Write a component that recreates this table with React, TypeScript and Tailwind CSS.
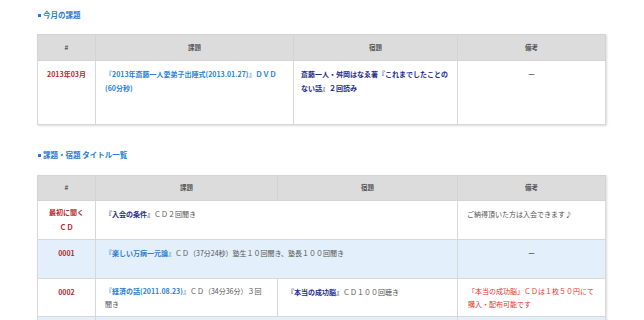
import React from "react";

const thBase = "bg-[#dcdcdc] border border-[#d4d4d4] text-[6.5px] font-bold text-[#555] text-center align-middle p-0";
const td = "border border-[#d8d8d8] align-top text-[7px] leading-[14px] pt-[6px] pb-[4px]";
const num = `${td} text-center font-bold text-[#b3272b] px-[4px]`;
const blue = "font-bold text-[#2b7fd3]";
const navy = "font-bold text-[#232d8c]";
const gray = "text-[#555]";
const red = "text-[#e5352b]";

function Heading({ children }: { children: React.ReactNode }) {
  return (
    <div className="flex items-center gap-[2px] h-[10px] pl-[1px] text-[7.5px] font-bold text-[#2a7dd0] leading-[10px]">
      <span className="inline-block w-[3px] h-[3px] bg-[#2a7dd0]" />
      <span>{children}</span>
    </div>
  );
}

export default function App() {
  const th1 = `${thBase} h-[26px]`;
  const th2 = `${thBase} h-[25px]`;
  return (
    <div className="w-[644px] h-[320px] overflow-hidden bg-white font-['Noto_Sans_CJK_JP','Noto_Sans',sans-serif]">
      <div className="pl-[37px] pt-[10px] flex flex-col">
        <Heading>今月の課題</Heading>
        <table className="mt-[14px] w-[568px] table-fixed border-collapse shadow-[1px_1px_2px_rgba(0,0,0,0.15)]">
          <colgroup>
            <col className="w-[58px]" />
            <col className="w-[198px]" />
            <col className="w-[164px]" />
            <col className="w-[148px]" />
          </colgroup>
          <thead>
            <tr>
              <th className={th1}>#</th>
              <th className={th1}>課題</th>
              <th className={th1}>宿題</th>
              <th className={th1}>備考</th>
            </tr>
          </thead>
          <tbody>
            <tr className="h-[64px] bg-white">
              <td className={num}>2013年03月</td>
              <td className={`${td} px-[9px]`}>
                <span className={blue}>『2013年斎藤一人愛弟子出陣式(2013.01.27)』ＤＶＤ (60分秒)</span>
              </td>
              <td className={`${td} px-[7px]`}>
                <span className={navy}>斎藤一人・舛岡はなゑ著『これまでしたことのない話』２回読み</span>
              </td>
              <td className={`${td} text-center ${gray}`}>ー</td>
            </tr>
          </tbody>
        </table>

        <div className="mt-[25px]">
          <Heading>課題・宿題 タイトル一覧</Heading>
        </div>
        <table className="mt-[15px] w-[568px] table-fixed border-collapse shadow-[1px_1px_2px_rgba(0,0,0,0.15)]">
          <colgroup>
            <col className="w-[58px]" />
            <col className="w-[182px]" />
            <col className="w-[180px]" />
            <col className="w-[148px]" />
          </colgroup>
          <thead>
            <tr>
              <th className={th2}>#</th>
              <th className={th2}>課題</th>
              <th className={th2}>宿題</th>
              <th className={th2}>備考</th>
            </tr>
          </thead>
          <tbody>
            <tr className="h-[38px] bg-white">
              <td className={`${num} !pt-[4px] !leading-[15px]`}>最初に聞く<br />ＣＤ</td>
              <td colSpan={2} className={`${td} px-[9px]`}>
                <span className={navy}>『入会の条件』</span>
                <span className={gray}>ＣＤ２回聞き</span>
              </td>
              <td className={`${td} px-[9px] ${gray}`}>ご納得頂いた方は入会できます♪</td>
            </tr>
            <tr className="h-[39px] bg-[#e3effa]">
              <td className={num}>0001</td>
              <td colSpan={2} className={`${td} px-[9px]`}>
                <span className={blue}>『楽しい万病一元論』</span>
                <span className={gray}>ＣＤ（37分24秒）塾生１０回聞き、塾長１００回聞き</span>
              </td>
              <td className={`${td} text-center ${gray}`}>ー</td>
            </tr>
            <tr className="h-[38px] bg-white">
              <td className={num}>0002</td>
              <td className={`${td} px-[9px] !leading-[13px]`}>
                <span className={blue}>『経済の話(2011.08.23)』</span>
                <span className={gray}>ＣＤ（34分36分）３回聞き</span>
              </td>
              <td className={`${td} px-[9px]`}>
                <span className={navy}>『本当の成功脳』</span>
                <span className={gray}>ＣＤ１００回聴き</span>
              </td>
              <td className={`${td} px-[10px] !leading-[13px] ${red}`}>「本当の成功脳」ＣＤは１枚５０円にて購入・配布可能です</td>
            </tr>
            <tr className="h-[38px] bg-[#e3effa]">
              <td className={td}></td>
              <td colSpan={2} className={td}></td>
              <td className={td}></td>
            </tr>
          </tbody>
        </table>
      </div>
    </div>
  );
}
